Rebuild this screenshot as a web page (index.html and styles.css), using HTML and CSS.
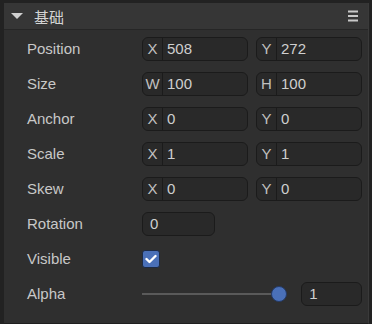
FILE: index.html
```html
<!DOCTYPE html>
<html>
<head>
    <title>基础</title>
    <link rel="stylesheet" href="styles.css">
</head>
<body>
    <div class="panel">
        <div class="panel-header">
            <span class="caret"></span>
            <span class="title">基础</span>
            <span class="menu">
                <svg width="10" height="12" viewBox="0 0 10 12">
                    <rect x="0" y="0.5" width="10" height="2" fill="#c8c8c8"/>
                    <rect x="0" y="5" width="10" height="2" fill="#c8c8c8"/>
                    <rect x="0" y="9.5" width="10" height="2" fill="#c8c8c8"/>
                </svg>
            </span>
        </div>
        <div class="panel-body">
            <div class="prop-row">
                <label>Position</label>
                <div class="field"><span class="tag">X</span><input type="text" value="508"></div>
                <div class="field"><span class="tag">Y</span><input type="text" value="272"></div>
            </div>
            <div class="prop-row">
                <label>Size</label>
                <div class="field"><span class="tag">W</span><input type="text" value="100"></div>
                <div class="field"><span class="tag">H</span><input type="text" value="100"></div>
            </div>
            <div class="prop-row">
                <label>Anchor</label>
                <div class="field"><span class="tag">X</span><input type="text" value="0"></div>
                <div class="field"><span class="tag">Y</span><input type="text" value="0"></div>
            </div>
            <div class="prop-row">
                <label>Scale</label>
                <div class="field"><span class="tag">X</span><input type="text" value="1"></div>
                <div class="field"><span class="tag">Y</span><input type="text" value="1"></div>
            </div>
            <div class="prop-row">
                <label>Skew</label>
                <div class="field"><span class="tag">X</span><input type="text" value="0"></div>
                <div class="field"><span class="tag">Y</span><input type="text" value="0"></div>
            </div>
            <div class="prop-row">
                <label>Rotation</label>
                <div class="field short"><input type="text" value="0"></div>
            </div>
            <div class="prop-row">
                <label>Visible</label>
                <span class="check">
                    <svg width="12" height="10" viewBox="0 0 12 10">
                        <path d="M1.5 5 L4.5 8 L10.5 2" stroke="#fff" stroke-width="2.4" fill="none" stroke-linecap="round" stroke-linejoin="round"/>
                    </svg>
                </span>
            </div>
            <div class="prop-row">
                <label>Alpha</label>
                <div class="slider"><div class="track"></div><div class="thumb"></div></div>
                <div class="field num"><input type="text" value="1"></div>
            </div>
        </div>
    </div>
</body>
</html>
```

FILE: styles.css
```css
body {
    margin: 0;
    background-color: #222;
    font-family: "Liberation Sans", Arial, "Noto Sans CJK SC", sans-serif;
    font-size: 15px;
    color: #c8c8c8;
    width: 372px;
    height: 324px;
    overflow: hidden;
}

.panel {
    margin: 3px 3px 0 4px;
    height: 321px;
    background-color: #2f2f2f;
    border-right: 1px solid #3a3a3a;
    border-bottom: 1px solid #1f1f1f;
    box-sizing: border-box;
}

.panel-header {
    display: flex;
    align-items: center;
    height: 26px;
    background-color: #363636;
    border-bottom: 1px solid #262626;
    padding: 0 10px 0 7px;
}

.caret {
    width: 0;
    height: 0;
    border-left: 6px solid transparent;
    border-right: 6px solid transparent;
    border-top: 6px solid #d0d0d0;
    margin-right: 11px;
}

.title {
    font-size: 15px;
    color: #d4d4d4;
    flex: 1;
}

.menu {
    display: flex;
}

.panel-body {
    padding: 1px 6px 0 23px;
}

.prop-row {
    display: flex;
    align-items: center;
    height: 35px;
    gap: 8px;
}

.prop-row label {
    width: 103px;
    margin-right: 4px;
}

.field {
    display: flex;
    align-items: center;
    width: 106px;
    height: 24px;
    box-sizing: border-box;
    background-color: #292929;
    border: 1px solid #1b1b1b;
    border-radius: 6px;
    overflow: hidden;
}

.field.short {
    width: 73px;
}

.field.num {
    width: 62px;
    margin-left: 10px;
}

.tag {
    width: 20px;
    height: 100%;
    display: flex;
    align-items: center;
    justify-content: center;
    border-right: 1px solid #1b1b1b;
    color: #c0c0c0;
    box-sizing: border-box;
}

.field input {
    flex: 1;
    min-width: 0;
    background: none;
    border: none;
    outline: none;
    color: #cfcfcf;
    font-family: inherit;
    font-size: 15px;
    padding: 0 0 0 4px;
}

.field.short input,
.field.num input {
    padding-left: 7px;
}

.check {
    width: 18px;
    height: 18px;
    border-radius: 3px;
    background-color: #4a70b8;
    border: 1px solid #1c2a44;
    box-sizing: border-box;
    display: flex;
    align-items: center;
    justify-content: center;
}

.slider {
    position: relative;
    width: 146px;
    height: 18px;
    display: flex;
    align-items: center;
}

.track {
    width: 136px;
    height: 2px;
    background-color: #5a5a5a;
    margin-left: 2px;
}

.thumb {
    position: absolute;
    left: 131px;
    top: 1px;
    width: 16px;
    height: 16px;
    border-radius: 50%;
    background-color: #4a70b8;
    border: 1px solid #243a66;
    box-sizing: border-box;
}
```
